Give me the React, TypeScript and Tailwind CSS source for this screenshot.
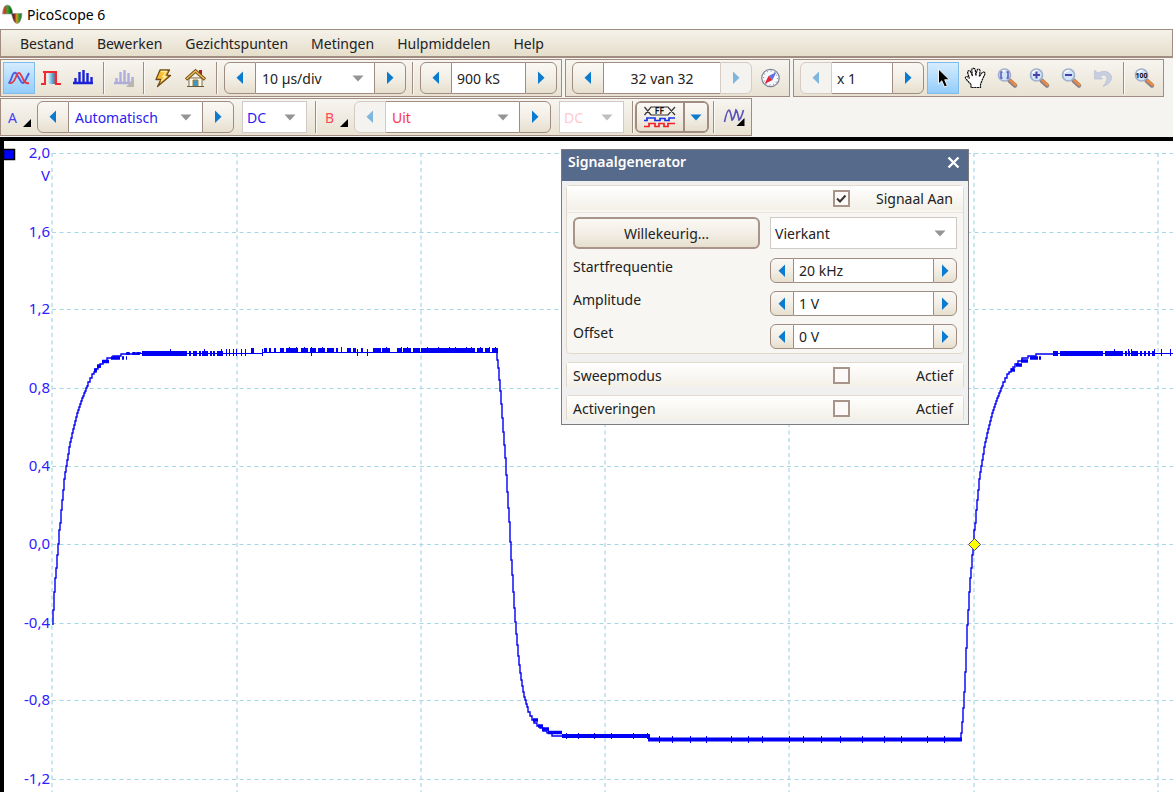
import React, { useState } from "react";

type Tone = "dark" | "blue" | "red";

const toneText: Record<Tone, string> = {
  dark: "text-[#222222]",
  blue: "text-[#2a1cf0]",
  red: "text-[#ff3344]",
};

const buttonFace = "bg-linear-to-b from-[#faf8f4] via-[#f3efe7] to-[#e7dfce]";
const bar = "border border-[#a08c80] bg-linear-to-b from-[#f7f5f0] to-[#e9e2d3]";

function Arrow({ dir, faded }: { dir: "left" | "right"; faded?: boolean }) {
  return (
    <svg width="8" height="14" viewBox="0 0 8 14" aria-hidden="true" className={faded ? "opacity-50" : ""}>
      <path d={dir === "left" ? "M7 0.5V13L0.5 6.7Z" : "M1 0.5V13L7.5 6.7Z"} fill="#0a7bcf" />
    </svg>
  );
}

function Spinner({
  label,
  width,
  children,
  small,
  prevOff,
  nextOff,
}: {
  label: string;
  width: string;
  children: React.ReactNode;
  small?: boolean;
  prevOff?: boolean;
  nextOff?: boolean;
}) {
  const side = small ? "w-6" : "w-8";
  const off = "bg-[#f5f3ef]";
  return (
    <div className={`flex shrink-0 ${small ? "h-[25px]" : "h-8"} ${width}`}>
      <button
        type="button"
        aria-label={`${label} vorige`}
        disabled={prevOff}
        className={`flex ${side} shrink-0 items-center justify-center rounded-l-md border ${prevOff ? `border-[#d5cbc3] ${off}` : `border-[#a08c80] ${buttonFace}`}`}
      >
        <Arrow dir="left" faded={prevOff} />
      </button>
      <div className="relative min-w-0 flex-1 border-y border-[#a08c80] bg-white">{children}</div>
      <button
        type="button"
        aria-label={`${label} volgende`}
        disabled={nextOff}
        className={`flex ${side} shrink-0 items-center justify-center rounded-r-md border ${nextOff ? `border-[#d5cbc3] ${off}` : `border-[#a08c80] ${buttonFace}`}`}
      >
        <Arrow dir="right" faded={nextOff} />
      </button>
    </div>
  );
}

function Field({ label, value, center }: { label: string; value: string; center?: boolean }) {
  return (
    <input
      aria-label={label}
      defaultValue={value}
      className={`block h-full w-full bg-transparent px-[5px] text-[#222222] outline-none ${center ? "text-center" : ""}`}
    />
  );
}

function Choice({
  label,
  options,
  tone = "dark",
  framed,
  disabled,
  width = "w-full",
}: {
  label: string;
  options: string[];
  tone?: Tone;
  framed?: boolean;
  disabled?: boolean;
  width?: string;
}) {
  return (
    <div className={`relative shrink-0 ${framed ? "h-8 border border-[#cfcac5] bg-white" : "h-full"} ${width}`}>
      <select
        aria-label={label}
        disabled={disabled}
        className={`block h-full w-full appearance-none bg-transparent pr-6 outline-none ${framed ? "pl-1" : "pl-[6px]"} ${disabled ? "text-[#ffc9cf]" : toneText[tone]}`}
      >
        {options.map((o) => (
          <option key={o}>{o}</option>
        ))}
      </select>
      <svg
        width="12"
        height="7"
        viewBox="0 0 12 7"
        aria-hidden="true"
        className={`pointer-events-none absolute top-1/2 right-[10px] -mt-[3px] ${disabled ? "opacity-60" : ""}`}
      >
        <path d="M0.5 0.5H11.5L6 6.5Z" fill="#949494" />
      </svg>
    </div>
  );
}

function Sep() {
  return <div className="h-8 w-[2px] shrink-0 border-r border-[#fbf9f5] bg-[#a08c80]" />;
}

function Tool({
  label,
  active,
  children,
}: {
  label: string;
  active?: boolean;
  children: React.ReactNode;
}) {
  return (
    <button
      type="button"
      aria-label={label}
      aria-pressed={active}
      className={`flex h-8 w-8 shrink-0 items-center justify-center border ${active ? "border-[#7fbcea] bg-linear-to-b from-[#d5ecfd] to-[#93cdfb]" : "border-transparent"}`}
    >
      {children}
    </button>
  );
}

const icon = { width: 24, height: 24, viewBox: "0 0 24 24", fill: "none", "aria-hidden": true } as const;

function ScopeIcon() {
  return (
    <svg {...icon}>
      <path d="M1.500 17Q3 16.500 4.500 12Q7 4 9.500 8L14 15.500Q16.500 19 18.500 14L22 7" stroke="#4d5be6" strokeWidth="1.900" />
      <path d="M2 17Q6 18 8.500 12Q11 5 13 7.500Q14.500 9.500 16.500 14Q18.500 18 22 17" stroke="#e43c46" strokeWidth="1.900" />
    </svg>
  );
}

function PersistenceIcon() {
  return (
    <svg {...icon}>
      <defs>
        <linearGradient id="persist">
          <stop offset="0" stopColor="#dff2fa" />
          <stop offset="0.600" stopColor="#4fa3cc" />
          <stop offset="1" stopColor="#d43040" />
        </linearGradient>
      </defs>
      <rect x="9" y="6" width="8" height="12" fill="url(#persist)" />
      <path d="M2 18H6V5.500M4 6H17V18H22" stroke="#f02a2f" strokeWidth="2" />
    </svg>
  );
}

function SpectrumIcon({ faded }: { faded?: boolean }) {
  return (
    <svg {...icon} className={faded ? "opacity-30" : ""}>
      <path d="M2 17H22M4.500 17V12M8.500 17V6M12.500 17V4M16.500 17V7M20.500 17V11" stroke="#1a22d8" strokeWidth="2.400" />
      {faded && <path d="M22 13V21H14Z" fill="#444" />}
    </svg>
  );
}

function BoltIcon() {
  return (
    <svg {...icon}>
      <path d="M9 4H18.500L15.500 9.500H19.500L6.500 20.500L10 13.500H5Z" fill="#f7bd32" stroke="#6e4b16" strokeWidth="1.300" strokeLinejoin="round" />
      <path d="M10 5.500H15L12 10.500H15L10 15" stroke="#fff0a8" strokeWidth="1.300" />
    </svg>
  );
}

function HomeIcon() {
  return (
    <svg {...icon}>
      <path d="M16 4H19V9H16Z" fill="#b81824" />
      <path d="M6 12H19V20.500H6Z" fill="#fffaf0" stroke="#7d6a4c" />
      <path d="M3 13.500L12.500 5L22 13.500" stroke="#6f4a14" strokeWidth="3.200" />
      <path d="M3.500 13L12.500 5L21.500 13" stroke="#e9bd52" strokeWidth="1.600" />
      <path d="M10 14H15V20.500H10Z" fill="#3f98c0" stroke="#a97b2e" />
      <path d="M4 20.500H21" stroke="#6b5a35" />
    </svg>
  );
}

function CompassIcon() {
  return (
    <svg {...icon}>
      <circle cx="12.500" cy="12" r="8.700" fill="#fbfcff" stroke="#7d8192" strokeWidth="1.200" />
      <circle cx="12.500" cy="12" r="6.900" stroke="#8d97b5" strokeWidth="1.200" strokeDasharray="1 2.600" />
      <path d="M18.500 6L14.500 14L10.500 10Z" fill="#6272e0" />
      <path d="M6.500 18L14.500 14L10.500 10Z" fill="#e52331" />
    </svg>
  );
}

function PointerIcon() {
  return (
    <svg {...icon}>
      <path d="M7.500 3V18L10.800 14.800L13.500 21L16.300 19.700L13.700 13.800H18.500Z" fill="#000" stroke="#fff" strokeWidth="0.900" />
    </svg>
  );
}

function HandIcon() {
  return (
    <svg {...icon}>
      <path
        d="M8 21.500V18.500L3 13Q1.500 11 3.500 10.500Q5 10.500 6.500 12.500L4.700 7Q4.300 4.700 6 4.600Q7.300 4.600 8 6.500L9.400 10L8.800 4.200Q8.800 2.300 10.500 2.300Q12 2.300 12.300 4.200L12.800 9.500L14 4.500Q14.500 2.800 16 3.200Q17.300 3.600 17 5.300L16.300 10.500L18.800 7Q20 5.500 21.300 6.300Q22.500 7.200 21.500 9L19 14.500L17.500 18.500V21.500Z"
        fill="#fff"
        stroke="#111"
        strokeWidth="1.200"
        strokeDasharray="2.200 0.500"
      />
    </svg>
  );
}

function LensIcon({ children }: { children: React.ReactNode }) {
  return (
    <svg {...icon}>
      <path d="M14.500 14.500L20 19.500" stroke="#8a8088" strokeWidth="4.400" strokeLinecap="round" />
      <path d="M15.500 14.500L20.500 19" stroke="#ed8a3e" strokeWidth="2.400" strokeLinecap="round" />
      <circle cx="9.500" cy="9" r="6" fill="#cfe5fa" stroke="#9fafcd" strokeWidth="1.700" />
      <path d="M5.500 7Q7 4.500 10.500 4.500" stroke="#fff" strokeWidth="1.400" />
      {children}
    </svg>
  );
}

function UndoIcon() {
  return (
    <svg {...icon}>
      <path d="M3.500 4V13H11.500L9 10.500Q13.500 7.500 15.500 10.500Q17 14.500 12 20.500Q21.500 17 20.500 10Q17 2.500 6.500 7Z" fill="#c8cede" stroke="#bac3d8" strokeWidth="0.800" />
    </svg>
  );
}

function CornerMark() {
  return (
    <svg width="8" height="8" viewBox="0 0 8 8" aria-hidden="true">
      <path d="M8 0V8H0Z" fill="#000" />
    </svg>
  );
}

function DigitalIcon() {
  return (
    <svg width="34" height="22" viewBox="0 0 34 22" fill="none" aria-hidden="true">
      <path d="M1.500 1L8 9M1.500 9L8 1H25L32 9M8 9H25L32 1" stroke="#333" strokeWidth="1.200" />
      <text x="16.500" y="8" textAnchor="middle" fontSize="8" fontWeight="700" fill="#111" fontFamily="DejaVu Sans Mono, monospace">
        FF
      </text>
      <path d="M1 14.500H4V12H12V14.500H17V12.500H22V14.500H26V12H32" stroke="#1637e8" strokeWidth="1.700" />
      <path d="M1 20.500H6V17.500H12V20.500H16V17.500H21V20.500H25V17.500H32" stroke="#f0222a" strokeWidth="1.700" />
    </svg>
  );
}

function WaveIcon() {
  return (
    <svg {...icon}>
      <path d="M1.500 17Q4 5 6 5Q7.500 6 9 15Q11 14 13 5Q14.500 6 16 15Q18 14 20.500 5" stroke="#5b57b8" strokeWidth="1.700" />
      <path d="M21.500 13V21H13.500Z" fill="#000" />
    </svg>
  );
}

function Logo() {
  return (
    <svg width="22" height="22" viewBox="0 0 22 22" aria-hidden="true">
      <defs>
        <linearGradient id="lobeA">
          <stop offset="0" stopColor="#f04a3a" />
          <stop offset="0.250" stopColor="#c33a2a" />
          <stop offset="0.450" stopColor="#3faa2a" />
          <stop offset="0.750" stopColor="#0d7a1e" />
          <stop offset="1" stopColor="#24283a" />
        </linearGradient>
        <linearGradient id="lobeB">
          <stop offset="0" stopColor="#20242c" />
          <stop offset="0.300" stopColor="#8a2a20" />
          <stop offset="0.500" stopColor="#d8a020" />
          <stop offset="0.700" stopColor="#3a9a30" />
          <stop offset="1" stopColor="#1e6a30" />
        </linearGradient>
      </defs>
      <path d="M0.500 10Q1 1 5.500 1Q9.500 1 11 10Z" fill="url(#lobeA)" stroke="#999" strokeWidth="0.600" />
      <path d="M9.500 9.500H20Q19 19.500 15 19.500Q11.500 19.500 9.500 9.500Z" fill="url(#lobeB)" stroke="#888" strokeWidth="0.600" />
    </svg>
  );
}

const risePoints: [number, number][] = [
  [968, 625], [969, 610], [970, 592], [971, 578], [972, 568], [973, 555], [974, 544], [975, 530], [976, 523],
  [977, 510], [978, 500], [979, 490], [980, 479], [981, 472], [982, 466], [983, 460], [984, 454], [985, 447], [986, 442],
  [987, 438], [988, 433], [989, 429], [990, 425], [991, 421], [992, 417], [993, 413], [994, 410], [995, 407], [996, 404],
  [997, 401], [998, 398], [999, 396], [1000, 393], [1001, 391], [1002, 388], [1003, 386], [1005, 382], [1007, 378],
  [1009, 374], [1011, 372], [1013, 369], [1015, 367], [1018, 364], [1022, 361], [1028, 358], [1036, 356], [1054, 354],
  [1056, 353],
];
const fallPoints: [number, number][] = [
  [497, 352], [498, 360], [499, 368], [500, 380], [501, 391], [502, 404], [503, 418], [504, 432], [505, 445],
  [506, 458], [507, 475], [508, 492], [509, 508], [510, 522], [511, 542], [512, 560], [513, 575], [514, 592],
  [515, 608], [516, 622], [517, 634], [518, 645], [519, 656], [520, 665], [521, 673], [522, 680], [523, 686],
  [524, 692], [525, 697], [526, 700], [527, 704], [528, 707], [530, 712], [532, 716], [534, 720], [537, 723],
  [540, 726], [543, 728], [547, 731], [552, 733], [563, 736],
];
const lastRiseStart: [number, number][] = [
  [961, 740], [962, 733], [963, 722], [964, 708], [965, 692], [966, 672], [967, 648],
];

const stepPath = (points: [number, number][], dx = 0) =>
  points.map(([x, y], i) => (i === 0 ? `M${x + dx} ${y}` : `V${y}H${x + dx}`)).join("");

const lowNoise = [
  [142, 45], [189, 2], [193, 4], [199, 2], [202, 6], [210, 2], [213, 2], [217, 6], [1053, 5], [1060, 43],
  [1105, 9], [1115, 8], [1125, 2], [1128, 2], [1132, 6], [1140, 2], [1144, 2], [1148, 2], [1152, 3],
];
const highNoise = [
  [251, 3], [264, 3], [269, 2], [274, 2], [280, 4], [286, 12], [301, 7], [310, 6], [318, 7], [327, 7], [336, 2],
  [341, 1], [347, 4], [353, 3], [361, 2], [373, 8], [382, 8], [397, 5], [403, 8], [413, 7], [421, 54],
  [477, 6], [485, 5], [492, 6],
];
const spikes = [170, 204, 221, 226, 229, 233, 236, 241, 245, 262, 311, 357, 367, 1114, 1128, 1131, 1154, 1161, 1170];
const bumps = [289, 296, 304, 311, 322, 341, 386, 401, 407, 427, 438, 449, 455, 466, 471, 480, 489, 495];
const bottomSpikes = [566, 578, 594, 611, 633, 647, 659, 672, 690, 706, 731, 748, 762, 789, 803, 821, 840, 862, 884, 901, 927, 944];

const columns = [52, 237, 421, 605, 789, 974, 1158];
const levels: [string, number][] = [
  ["2,0", 153], ["1,6", 232], ["1,2", 309], ["0,8", 388], ["0,4", 466], ["0,0", 544], ["-0,4", 623], ["-0,8", 700], ["-1,2", 779],
];

function Graph() {
  return (
    <svg
      viewBox="4 141 1169 651"
      preserveAspectRatio="xMinYMin slice"
      className="block h-full w-full"
      role="img"
      aria-label="Oscilloscoopweergave kanaal A"
    >
      <g stroke="#b9dfea" strokeDasharray="4 3.500">
        {columns.map((x) => (
          <path key={x} d={`M${x} 153V800`} strokeWidth="2" opacity="0.750" />
        ))}
        {levels.map(([name, y]) => (
          <path key={name} d={`M52 ${y + 0.5}H1180`} stroke="#a5d7e5" />
        ))}
      </g>
      <g fill="#2f20ff" fontSize="15" textAnchor="end">
        {levels.map(([name, y]) => (
          <text key={name} x="50" y={y + 5}>
            {name}
          </text>
        ))}
        <text x="50" y="181">V</text>
      </g>
      <rect x="3.500" y="149.500" width="11" height="10" fill="#0000ff" stroke="#000" strokeWidth="1.500" />
      <g stroke="#0000f5" strokeWidth="1.400" fill="none">
        <path d={stepPath(risePoints, -915)} />
        <path d={stepPath(fallPoints)} />
        <path d={stepPath([...lastRiseStart, ...risePoints])} />
        <path d="M139 353.500H262M262 352.500H497M1054 353.500H1180" strokeWidth="1" />
        <path d="M94 370H97M97 366H101M102 361.500H109M111 358H120M122 358H124M126 358H127M128 352V355M134 352V355M138 352V355" strokeWidth="3.500" />
        <path d="M533 720H538M538 726H543M542 729H549M548 732.500H562M1011 370H1015M1016 365H1022M1021 361H1028M1030 358H1038M1039 358H1041" strokeWidth="3.500" />
        <path d="M562 736H650M648 739.500H962" strokeWidth="4" />
        <path d={spikes.map((x) => `M${x}.5 349V356`).join("")} strokeWidth="1" />
        <path d={bumps.map((x) => `M${x}.5 347V352`).join("")} strokeWidth="1" />
        <path d={bottomSpikes.map((x) => `M${x}.5 ${x < 650 ? 733 : 736}V${x < 650 ? 739 : 743}`).join("")} strokeWidth="1" />
      </g>
      <g fill="#0000f5">
        {lowNoise.map(([x, w]) => (
          <rect key={x} x={x} y="351" width={w} height="5" />
        ))}
        {highNoise.map(([x, w]) => (
          <rect key={x} x={x} y="348" width={w} height="5" />
        ))}
      </g>
      <path d="M974.500 538.500L980.500 544.500L974.500 550.500L968.500 544.500Z" fill="#ffff00" stroke="#46469a" />
    </svg>
  );
}

function Tick({ id, defaultChecked }: { id: string; defaultChecked?: boolean }) {
  return (
    <span className="relative block h-[17px] w-[17px]">
      <input
        id={id}
        type="checkbox"
        defaultChecked={defaultChecked}
        className="peer block h-[17px] w-[17px] appearance-none border-2 border-[#a89488] bg-[#fbfaf8]"
      />
      <svg
        width="17"
        height="17"
        viewBox="0 0 17 17"
        aria-hidden="true"
        className="pointer-events-none absolute inset-0 hidden peer-checked:block"
      >
        <path d="M4 8.500L7 11.500L12.500 5.500" fill="none" stroke="#3b3433" strokeWidth="2" />
      </svg>
    </span>
  );
}

function SectionHead({ title, id, text, checked }: { title?: string; id: string; text: string; checked?: boolean }) {
  return (
    <div className="grid h-6 grid-cols-[1fr_18px_102px] items-center bg-linear-to-b from-white to-[#f3f0e7] pr-[10px] pl-[6px]">
      <h3>{title}</h3>
      <Tick id={id} defaultChecked={checked} />
      <label htmlFor={id} className="text-right">
        {text}
      </label>
    </div>
  );
}

function SignalDialog({ onClose }: { onClose: () => void }) {
  const rows = [
    ["Startfrequentie", "20 kHz"],
    ["Amplitude", "1 V"],
    ["Offset", "0 V"],
  ];
  return (
    <section
      role="dialog"
      aria-label="Signaalgenerator"
      className="absolute top-[8px] left-[557px] w-[408px] border border-[#7c7c7e] bg-[#f0f0f0] text-[#222222]"
    >
      <header className="flex h-[31px] items-start justify-between bg-[#566a8b] pt-px pr-[7px] pl-[6px] text-white">
        <h2 className="text-[14px] leading-[22px] font-semibold">Signaalgenerator</h2>
        <button type="button" aria-label="Sluiten" onClick={onClose} className="flex h-[22px] w-4 items-center justify-center">
          <svg width="13" height="13" viewBox="0 0 13 13" aria-hidden="true">
            <path d="M1.500 1.500L11.500 11.500M11.500 1.500L1.500 11.500" stroke="#fff" strokeWidth="2.400" />
          </svg>
        </button>
      </header>
      <div className="flex flex-col gap-2 px-1 pt-1 pb-1">
        <div className="rounded-sm border border-[#e2d9cb] bg-[#f7f6f2]">
          <div className="border-b border-[#ece5d8] pb-[2px]">
            <SectionHead id="signal-on" text="Signaal Aan" checked />
          </div>
          <div className="flex flex-col gap-2 px-[6px] pt-1 pb-1">
            <div className="grid grid-cols-2 gap-[10px] pb-px">
              <button type="button" className={`h-8 rounded-md border-2 border-[#a89488] ${buttonFace}`}>
                Willekeurig...
              </button>
              <Choice label="Golfvorm" framed options={["Vierkant", "Sinus", "Driehoek"]} />
            </div>
            {rows.map(([name, value]) => (
              <div key={name} className="grid grid-cols-2 gap-[10px]">
                <span className="leading-[18px]">{name}</span>
                <Spinner small label={name} width="w-full">
                  <Field label={name} value={value} />
                </Spinner>
              </div>
            ))}
          </div>
        </div>
        <div className="rounded-t-sm border border-b-0 border-[#e2d9cb]">
          <SectionHead title="Sweepmodus" id="sweep" text="Actief" />
        </div>
        <div className="rounded-t-sm border border-b-0 border-[#e2d9cb]">
          <SectionHead title="Activeringen" id="trigger" text="Actief" />
        </div>
      </div>
    </section>
  );
}

export default function App() {
  const [open, setOpen] = useState(true);
  return (
    <div className="flex h-screen flex-col overflow-hidden bg-[#f5f4f1] font-['Noto_Sans','Open_Sans',sans-serif] text-[14px] text-[#222222]">
      <header className="flex h-[29px] shrink-0 items-center gap-[3px] bg-white pl-[2px] text-black">
        <Logo />
        <h1>PicoScope 6</h1>
      </header>

      <nav className="flex h-[29px] shrink-0 items-center gap-[23px] border border-b-2 border-[#a08c80] bg-linear-to-b from-[#f5f2ea] to-[#e6decb] pl-[19px]">
        {["Bestand", "Bewerken", "Gezichtspunten", "Metingen", "Hulpmiddelen", "Help"].map((m) => (
          <button key={m} type="button">
            {m}
          </button>
        ))}
      </nav>

      <div className="flex h-10 shrink-0 items-start gap-[3px] pt-px">
        <div className={`flex h-[38px] w-[562px] shrink-0 items-center pl-[2px] ${bar}`}>
          <Tool label="Oscilloscoopmodus" active><ScopeIcon /></Tool>
          <Tool label="Persistentiemodus"><PersistenceIcon /></Tool>
          <Tool label="Spectrummodus"><SpectrumIcon /></Tool>
          <div className="mr-[2px] ml-1 flex items-center gap-[3px]">
            <Sep />
            <Tool label="Spectrumopties"><SpectrumIcon faded /></Tool>
            <Sep />
          </div>
          <Tool label="Automatisch instellen"><BoltIcon /></Tool>
          <Tool label="Begininstellingen"><HomeIcon /></Tool>
          <div className="ml-[5px] flex items-center gap-[6px]">
            <Sep />
            <Spinner label="Tijdbasis" width="w-[182px]">
              <Choice label="Tijdbasis" options={["10 µs/div", "20 µs/div", "50 µs/div"]} />
            </Spinner>
            <Sep />
            <Spinner label="Samples" width="w-[137px]">
              <Field label="Samples" value="900 kS" />
            </Spinner>
          </div>
        </div>
        <div className={`flex h-[38px] w-[225px] shrink-0 items-center gap-[2px] pl-[6px] ${bar}`}>
          <Spinner label="Golfvormbuffer" width="w-[180px]" nextOff>
            <Field label="Golfvormbuffer" value="32 van 32" center />
          </Spinner>
          <Tool label="Buffernavigator"><CompassIcon /></Tool>
        </div>
        <div className={`flex h-[38px] w-[371px] shrink-0 items-center pl-[6px] ${bar}`}>
          <Spinner label="Zoomfactor" width="w-[124px]" prevOff>
            <Field label="Zoomfactor" value="x 1" />
          </Spinner>
          <div className="ml-[3px] flex">
            <Tool label="Selecteren" active><PointerIcon /></Tool>
            <Tool label="Verschuiven"><HandIcon /></Tool>
            <Tool label="Zoom venster">
              <LensIcon><path d="M7.500 6H6V12H7.500M11.500 6H13V12H11.500" stroke="#5d55b5" strokeWidth="1.500" /></LensIcon>
            </Tool>
            <Tool label="Inzoomen">
              <LensIcon><path d="M6 9H13M9.500 5.500V12.500" stroke="#4d3fa8" strokeWidth="2" /></LensIcon>
            </Tool>
            <Tool label="Uitzoomen">
              <LensIcon><path d="M6 9H13" stroke="#4d3fa8" strokeWidth="2" /></LensIcon>
            </Tool>
            <Tool label="Zoom ongedaan maken"><UndoIcon /></Tool>
          </div>
          <div className="ml-1 flex gap-[3px]">
            <Sep />
            <Tool label="Volledig beeld">
              <LensIcon>
                <text x="9.500" y="11.500" textAnchor="middle" fontSize="7" fontWeight="700" fill="#111">100</text>
              </LensIcon>
            </Tool>
          </div>
        </div>
      </div>

      <div className="flex h-[39px] shrink-0 items-start">
        <div className={`flex h-[38px] w-[752px] shrink-0 items-center ${bar}`}>
          <button type="button" aria-label="Kanaal A" className="flex h-8 w-9 shrink-0 items-center justify-between pr-[6px] pl-[7px] text-[#4a3cf0]">
            A
            <span className="mt-3"><CornerMark /></span>
          </button>
          <Spinner label="Bereik kanaal A" width="w-[197px]">
            <Choice label="Bereik kanaal A" tone="blue" options={["Automatisch", "±1 V", "±2 V"]} />
          </Spinner>
          <div className="ml-2 flex shrink-0 items-center gap-2">
            <Choice label="Koppeling kanaal A" tone="blue" framed width="w-[65px]" options={["DC", "AC"]} />
            <Sep />
          </div>
          <button type="button" aria-label="Kanaal B" className="flex h-8 w-[37px] shrink-0 items-center justify-between pr-[6px] pl-2 text-[#ff4a55]">
            B
            <span className="mt-3"><CornerMark /></span>
          </button>
          <Spinner label="Bereik kanaal B" width="w-[197px]" prevOff>
            <Choice label="Bereik kanaal B" tone="red" options={["Uit", "±1 V", "±2 V"]} />
          </Spinner>
          <div className="ml-2 flex shrink-0 items-center gap-2">
            <Choice label="Koppeling kanaal B" framed disabled width="w-[65px]" options={["DC", "AC"]} />
            <Sep />
          </div>
          <div className="ml-px flex shrink-0 items-center gap-1">
            <div className="flex h-8 rounded-md border-2 border-[#a08c80]">
              <button type="button" aria-label="Digitale uitgang" className={`flex w-[46px] items-center justify-center rounded-l-sm ${buttonFace}`}>
                <DigitalIcon />
              </button>
              <button type="button" aria-label="Digitale opties" className={`flex w-6 items-center justify-center rounded-r-sm border-l-2 border-[#a08c80] ${buttonFace}`}>
                <svg width="12" height="7" viewBox="0 0 12 7" aria-hidden="true">
                  <path d="M0.500 0.500H11.500L6 6.500Z" fill="#0a7bcf" />
                </svg>
              </button>
            </div>
            <Sep />
            <Tool label="Signaalgenerator"><WaveIcon /></Tool>
          </div>
        </div>
      </div>

      <main className="relative min-h-0 flex-1 border-t-4 border-l-4 border-black bg-white">
        <Graph />
        {open && <SignalDialog onClose={() => setOpen(false)} />}
      </main>
    </div>
  );
}
